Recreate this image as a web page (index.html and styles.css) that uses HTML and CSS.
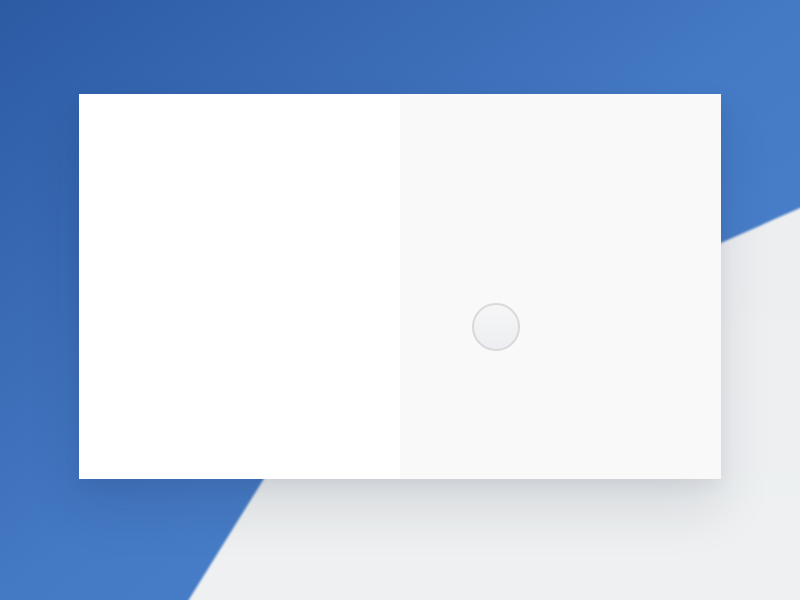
FILE: index.html
```html
<!DOCTYPE html>
<html lang="en">
<head>
<meta charset="utf-8">
<title>Card</title>
<link rel="stylesheet" href="styles.css">
</head>
<body>
<div class="scene">
  <svg class="wave" width="800" height="600" viewBox="0 0 800 600" aria-hidden="true">
    <defs>
      <linearGradient id="g" x1="0" y1="0" x2="0" y2="1">
        <stop offset="0" stop-color="#eceef0"/>
        <stop offset="1" stop-color="#eef1f2"/>
      </linearGradient>
      <filter id="soft" x="-5%" y="-5%" width="110%" height="110%">
        <feGaussianBlur stdDeviation="1.1"/>
      </filter>
    </defs>
    <path d="M 175 622 L 270 469 C 330 373, 561 315, 721 243 C 748 231, 775 219, 800 208 L 832 194 L 832 630 Z" fill="url(#g)" filter="url(#soft)"/>
  </svg>
  <main class="stage">
    <section class="card">
      <div class="pane pane-left"></div>
      <div class="pane pane-right">
        <button class="knob" type="button" aria-label="toggle"></button>
      </div>
    </section>
  </main>
</div>
</body>
</html>
```
FILE: styles.css
```css
html, body {
  margin: 0;
  padding: 0;
  width: 800px;
  height: 600px;
  overflow: hidden;
  font-family: "Liberation Sans", Arial, sans-serif;
}

.scene {
  position: relative;
  width: 800px;
  height: 600px;
  background: linear-gradient(to bottom right, #2c5ba4 0%, #3a6bb5 28%, #4479c4 50%, #4e86cf 100%);
}

.wave {
  position: absolute;
  left: 0;
  top: 0;
}

.stage {
  position: relative;
  padding: 94px 79px 0 79px;
}

.card {
  width: 642px;
  height: 385px;
  display: grid;
  grid-template-columns: 321px 321px;
  background: #ffffff;
  box-shadow: 0 30px 50px rgba(30, 40, 60, 0.11), 0 8px 16px rgba(30, 40, 60, 0.06);
}

.pane-left {
  background: #ffffff;
}

.pane-right {
  background: #f9f9f9;
  padding: 209px 0 0 72px;
  box-sizing: border-box;
}

.knob {
  display: block;
  width: 48px;
  height: 48px;
  padding: 0;
  border-radius: 50%;
  border: 2px solid #d9d9d9;
  background: linear-gradient(180deg, #f6f6f7 0%, #eceef1 100%);
  box-sizing: border-box;
}
```
